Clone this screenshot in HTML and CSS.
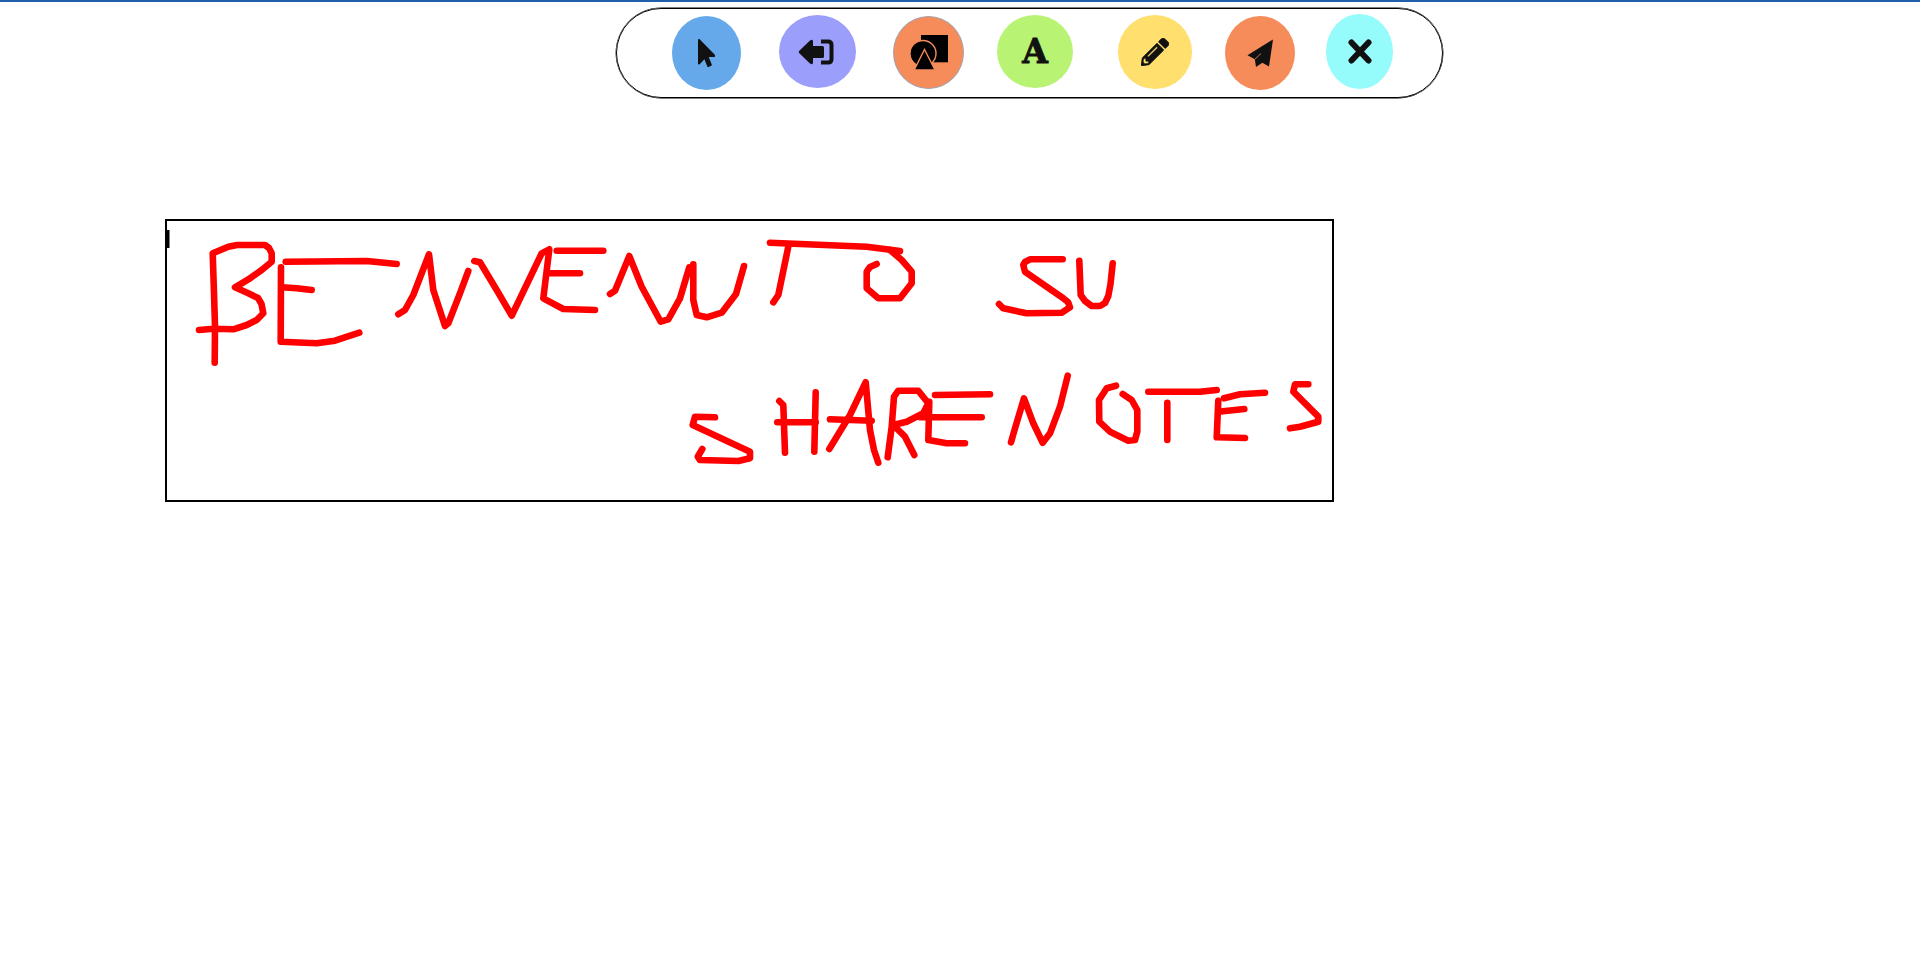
FILE: index.html
```html
<!DOCTYPE html>
<html lang="en">
<head>
    <meta charset="UTF-8">
    <meta name="viewport" content="width=device-width, initial-scale=1.0">
    <title>ShareNotes</title>
    <link rel="stylesheet" href="styles.css">
</head>
<body>
    <div class="topline"></div>

    <div class="toolbar">
        <button type="button" class="tool tool-select">
            <svg width="17.5" height="28" viewBox="0 0 320 512"><path d="M302.189 329.126H196.105l55.831 135.993c3.889 9.428-.555 19.999-9.444 23.999l-49.165 21.427c-9.165 4-19.443-.571-23.332-9.714l-53.053-129.136-86.664 89.138C18.729 472.71 0 463.554 0 447.977V18.299C0 1.899 19.921-6.096 30.277 5.443l284.412 292.542c11.472 11.179 3.007 31.141-12.5 31.141z"/></svg>
        </button>
        <button type="button" class="tool tool-back">
            <svg width="36" height="26" viewBox="0 0 36 26">
                <path d="M1.6 11.4 L12 1.4 Q15 -.4 15 2.5 V7 H24.5 Q26 7 26 8.5 V17.5 Q26 19 24.5 19 H15 V23.5 Q15 26.4 12 24.6 L1.6 14.6 Q0 13 1.6 11.4 Z"/>
                <path class="bracket" d="M23 2.5 H30 Q33.5 2.5 33.5 6 V20 Q33.5 23.5 30 23.5 H23"/>
            </svg>
        </button>
        <button type="button" class="tool tool-shapes">
            <svg width="38" height="36" viewBox="909 34 38 36">
                <rect x="920" y="34" width="27" height="27.3"/>
                <circle class="cutout" cx="922" cy="52.5" r="13"/>
                <circle cx="921.5" cy="52.5" r="11.6"/>
                <path class="cutout" d="M923.5 48.5 L934 69 H913.2 Z"/>
            </svg>
        </button>
        <button type="button" class="tool tool-text"><span class="letter">A</span></button>
        <button type="button" class="tool tool-pen">
            <svg width="28" height="28" viewBox="0 0 512 512"><path d="M497.9 142.1l-46.1 46.1c-4.7 4.7-12.3 4.7-17 0l-111-111c-4.7-4.7-4.7-12.3 0-17l46.1-46.1c18.7-18.7 49.1-18.7 67.9 0l60.1 60.1c18.8 18.7 18.8 49.1 0 67.9zM284.2 99.8L21.6 362.4.4 483.9c-2.9 16.4 11.4 30.6 27.8 27.8l121.5-21.3 262.6-262.6c4.7-4.7 4.7-12.3 0-17l-111-111c-4.8-4.7-12.4-4.7-17.1 0zM124.1 339.9c-5.5-5.5-5.5-14.3 0-19.8l154-154c5.5-5.5 14.3-5.5 19.8 0s5.5 14.3 0 19.8l-154 154c-5.5 5.5-14.3 5.5-19.8 0zM88 424h48v36.3l-64.5 11.3-31.1-31.1L51.7 376H88v48z"/></svg>
        </button>
        <button type="button" class="tool tool-send">
            <svg width="27" height="28" viewBox="1248 38 27 28">
                <path d="M1274 38.5 L1270 65.5 L1263.3 61.7 L1257 66 L1255.8 58.3 L1248.5 54.3 Z"/>
                <path class="fold" d="M1255.8 58.3 L1262 52.5"/>
            </svg>
        </button>
        <button type="button" class="tool tool-close">
            <svg width="24" height="25" viewBox="0 0 24 25">
                <path class="cross" d="M3.5 3.5 L20.5 21.5 M20.5 3.5 L3.5 21.5"/>
            </svg>
        </button>
    </div>

    <div class="board">
        <!-- viewBox is in page coordinates, so strokes can be read straight off the screen -->
        <svg class="drawing" width="1165" height="279" viewBox="167 221 1165 279">
            <rect class="caret" x="167" y="230" width="2.5" height="18"/>
            <g class="ink">
                <!-- BENVENUTO -->
                <polyline points="214.7,362.7 215,326.7 214,293 212.7,253.3 228.3,246.7 237.3,245 265,245 269,248 271.7,253.3 271.7,261.7 261.7,270 250,278.3 235,287.3 248.3,293.3 258,298 261.5,304 263.3,313.3 256.7,320 246.7,325 233.3,329.3 213.3,328.7 199,330"/>
                <polyline points="285.7,261.7 366.7,261 396.7,264"/>
                <polyline points="281,267.3 280.7,341.7 316.7,343.3 335,340.7 359.3,332.7"/>
                <polyline points="281.7,287.3 296.7,288.3 311.7,290"/>
                <polyline points="398.3,314.3 405,310 413.3,295 429,254.3 433.3,290 445,326 448.3,323.3 460,293.3 468.3,271"/>
                <polyline points="474.3,261 480,262.3 496.7,290 511.7,315.7 541.7,253.3 549.3,249.3 543.3,298.3 563.3,309 595,310"/>
                <polyline points="556.7,250.7 603.3,250.7"/>
                <polyline points="550,273.3 580,273.3"/>
                <polyline points="610,294 615,290.7 629.3,256 641.7,286.7 660.7,321.7 668.3,319.3 680,298.3 689.3,267.3"/>
                <polyline points="693.3,264.3 693.3,300 696.7,315 706.7,317.3 721.7,312.7 736,294 744,266"/>
                <polyline points="770,242.7 866.7,246.7 900,251"/>
                <polyline points="890,250 901.7,260 911.7,271.7 911.7,283.3 900,298.3 878.3,298.3 866.7,288.3 866.7,271.7 870,267 876.7,264"/>
                <polyline points="788.3,246.7 778.3,295 773.3,302.3"/>
                <!-- SU -->
                <polyline points="1062.7,259.3 1030,259.3 1025,262 1023.3,265 1025,271.7 1063.3,298.3 1068,302 1070,307.3 1061.7,312.7 1026.7,313.3 1003.3,308.3 999,304"/>
                <polyline points="1079.3,260.7 1080.7,295 1085,301 1091.7,306 1100,306 1105,303 1108.3,296 1110.5,284 1112.7,263.3"/>
                <!-- SHARE -->
                <polyline points="715,417.3 695,416.7 692.7,425 750,451.7 750,458.3 738.3,461 700,460 697.7,456.7 702.3,449"/>
                <polyline points="779.3,401 783.3,405 785,452.7"/>
                <polyline points="777.3,422.3 815.7,422.3"/>
                <polyline points="815.7,392.3 814.3,451.7"/>
                <polyline points="829.3,449 850,415 865.7,382.3 870,430 874,450 878.3,462.7"/>
                <polyline points="830,419.3 871.7,420.7"/>
                <polyline points="887.7,457.3 891.7,426.7 894,396.7 898.3,390.7 918.3,390.7 928.3,403.3 923.3,413.3 906.7,421.7 893.3,425 905,436.7 914.3,455"/>
                <polyline points="935,395 990,394.3"/>
                <polyline points="920,417.3 981.7,417.3"/>
                <polyline points="929.3,401.7 928.3,440 946.7,443.3 965,443.3"/>
                <!-- NOTES -->
                <polyline points="1011,442.3 1015,428.3 1024,398.3 1033.3,423.3 1042.7,442.7 1050,433.3 1060,406.7 1067.7,375.7"/>
                <polyline points="1116,385.7 1106.7,388.3 1099,400 1099.3,421.7 1110,431.7 1128.3,440.7 1135,440 1137.3,431.7 1137.3,410 1131.7,400 1122.7,394"/>
                <polyline points="1148.3,391.7 1200,391.7 1216.7,390"/>
                <polyline points="1167.3,402.7 1167.3,440"/>
                <polyline points="1224,398.3 1240,394.3 1265,392.7"/>
                <polyline points="1218.3,400.7 1216.7,437.3 1245,438"/>
                <polyline points="1218.3,411.7 1244.3,409"/>
                <polyline points="1308.3,384.3 1295,384.3 1293.3,391.7 1318.3,416.7 1318.3,421.7 1300,426.7 1290,428.3"/>
            </g>
        </svg>
    </div>
</body>
</html>
```

FILE: styles.css
```css
body {
    margin: 0;
    background-color: white;
    font-family: "Liberation Sans", Arial, sans-serif;
}
.topline {
    height: 2px;
    background-color: #1f5ea8;
}
.toolbar {
    display: flex;
    align-items: flex-start;
    box-sizing: border-box;
    width: 827px;
    height: 90px;
    margin: 6px 0 0 616px;
    padding-left: 55px;
    border: 1px solid black;
    border-radius: 45px;
    box-shadow: 0 0 0 0.4px black;
}
.tool {
    display: flex;
    align-items: center;
    justify-content: center;
    box-sizing: border-box;
    flex: none;
    padding: 0;
    border: none;
    border-radius: 50%;
    color: #111;
    cursor: pointer;
}
.tool svg {
    display: block;
    fill: #111;
}
.tool-select {
    width: 69px;
    height: 74px;
    margin-top: 7px;
    background-color: #65a9eb;
}
.tool-back {
    width: 77px;
    height: 73px;
    margin: 6px 0 0 38px;
    background-color: #9b9efa;
}
.tool-back svg {
    margin-right: 3px;
}
.tool-shapes {
    width: 71px;
    height: 73px;
    margin: 7px 0 0 37px;
    background-color: #f58c5a;
    border: 1px solid #a9a0a8;
}
.tool-shapes svg {
    fill: black;
}
.tool-text {
    width: 76px;
    height: 73px;
    margin: 6px 0 0 33px;
    background-color: #b8f373;
}
.tool-pen {
    width: 74px;
    height: 74px;
    margin: 6px 0 0 45px;
    background-color: #ffdf6e;
}
.tool-pen svg {
    stroke: #111;
    stroke-width: 8;
}
.tool-send {
    width: 70px;
    height: 74px;
    margin: 7px 0 0 33px;
    background-color: #f58c5a;
}
.tool-close {
    width: 67px;
    height: 75px;
    margin: 5px 0 0 31px;
    background-color: #96fbfb;
}
.letter {
    font-family: "DejaVu Serif", serif;
    font-size: 33px;
    font-weight: bold;
    line-height: 1;
    -webkit-text-stroke: 0.8px #111;
}
.bracket {
    fill: none;
    stroke: #111;
    stroke-width: 4;
}
.cutout {
    stroke: #f58c5a;
    stroke-width: 1.4;
}
.fold {
    fill: none;
    stroke: #f58c5a;
    stroke-width: 0.8;
}
.cross {
    fill: none;
    stroke: #111;
    stroke-width: 6;
    stroke-linecap: round;
}
.board {
    box-sizing: border-box;
    width: 1169px;
    height: 283px;
    margin: 121px 0 0 165px;
    border: 2px solid black;
}
.drawing {
    display: block;
}
.caret {
    fill: black;
}
.ink polyline {
    fill: none;
    stroke: #ff0000;
    stroke-width: 6.6;
    stroke-linecap: round;
    stroke-linejoin: round;
}
```
